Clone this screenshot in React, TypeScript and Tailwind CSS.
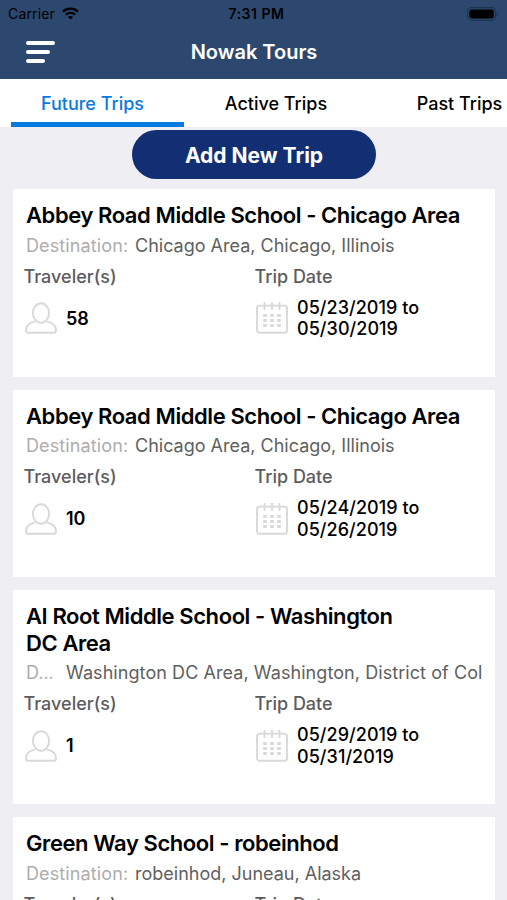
import { ReactNode } from "react";

const trips = [
  {
    title: ["Abbey Road Middle School - Chicago Area"],
    destination: "Chicago Area, Chicago, Illinois",
    travelers: 58,
    start: "05/23/2019",
    end: "05/30/2019",
  },
  {
    title: ["Abbey Road Middle School - Chicago Area"],
    destination: "Chicago Area, Chicago, Illinois",
    travelers: 10,
    start: "05/24/2019",
    end: "05/26/2019",
  },
  {
    title: ["AI Root Middle School - Washington", "DC Area"],
    destination: "Washington DC Area, Washington, District of Col",
    travelers: 1,
    start: "05/29/2019",
    end: "05/31/2019",
    shortLabel: true,
  },
  {
    title: ["Green Way School - robeinhod"],
    destination: "robeinhod, Juneau, Alaska",
  },
];

const WifiIcon = () => (
  <svg width="17" height="13" viewBox="0 0 17 13" fill="none" stroke="#000" strokeWidth="2.4">
    <path d="M1 4.6C5.2.6 11.8.6 16 4.6" />
    <path d="M3.8 7.7c2.7-2.5 6.7-2.5 9.4 0" />
    <path d="M8.5 12.6 5.9 10c1.5-1.3 3.7-1.3 5.2 0z" fill="#000" stroke="none" />
  </svg>
);

const BatteryIcon = () => (
  <svg width="32" height="14" viewBox="0 0 32 14">
    <rect x="0.6" y="0.6" width="28" height="12.8" rx="4" fill="none" stroke="#1f3350" strokeWidth="1.1" />
    <rect x="2.4" y="2.4" width="24.4" height="9.2" rx="2.4" fill="#000" />
    <path d="M30 4.8c1.5.6 1.5 3.8 0 4.4z" fill="#1f3350" />
  </svg>
);

const PersonIcon = () => (
  <svg width="32" height="32" viewBox="0 0 32 32" fill="none" stroke="#dad8d8" strokeWidth="1.9">
    <ellipse cx="16" cy="11" rx="8.1" ry="9.8" />
    <path d="M10 19.6C4.5 20.6 1 23.6 1 28.2c0 1.8.8 2.6 2.4 2.6h25.2c1.6 0 2.4-.8 2.4-2.6 0-4.6-3.5-7.6-9-8.600" />
  </svg>
);

const CalendarIcon = () => (
  <svg width="32" height="32" viewBox="0 0 32 32" fill="none" stroke="#dad8d8" strokeWidth="1.9">
    <rect x="1" y="3.6" width="30" height="27.2" rx="2.6" />
    <path d="M8.5 0v8M16 0v8M23.5 0v8" strokeWidth="1.8" />
    <path
      d="M7.2 13.5h3.6M14.2 13.5h3.6M21.2 13.5h3.6M7.2 18.5h3.6M14.2 18.5h3.6M21.2 18.5h3.6M7.2 23.500h3.6M14.2 23.5h3.6M21.2 23.5h3.6"
      strokeWidth="3"
    />
  </svg>
);

const Tab = ({ children, className }: { children: ReactNode; className: string }) => (
  <div className={`shrink-0 text-[18px] font-medium leading-[50px] ${className}`}>{children}</div>
);

const TripCard = ({ trip }: { trip: (typeof trips)[number] }) => {
  return (
    <div className="bg-white pl-[13px] pt-[13px] pb-[37px]">
      <div className="text-[22px] leading-[26.5px] tracking-[-0.42px] font-semibold text-black whitespace-nowrap">
        {trip.title.map((line) => (
          <div key={line}>{line}</div>
        ))}
      </div>
      <div className="mt-[2px] flex text-[18px] leading-[30px] whitespace-nowrap">
        <span
          className={
            trip.shortLabel ? "w-[40px] text-[#adadad]" : "w-[109px] tracking-[0.12px] text-[#adadad]"
          }
        >
          {trip.shortLabel ? "D..." : "Destination:"}
        </span>
        <span className={trip.shortLabel ? "tracking-[0.07px] text-[#606060]" : "text-[#606060]"}>
          {trip.destination}
        </span>
      </div>
      <div className="-ml-[2.5px] mt-px flex text-[18px] leading-[30px] font-medium text-[#5c5c5c]">
        <span className="w-[231px]">Traveler(s)</span>
        <span>Trip Date</span>
      </div>
      {trip.start && (
        <div className="-ml-px mt-[5px] flex h-[43px] items-center text-[18px] leading-[21.5px] text-black">
          <div className="flex w-[231px] items-center gap-[9px]">
            <PersonIcon />
            <span className="font-semibold">{trip.travelers}</span>
          </div>
          <CalendarIcon />
          <div className="ml-[9px] font-medium tracking-[0.05px]">
            <div>{trip.start} to</div>
            <div>{trip.end}</div>
          </div>
        </div>
      )}
    </div>
  );
};

const App = () => {
  return (
    <div className="h-[900px] overflow-hidden bg-[#efeef3] font-['Inter',sans-serif]">
      <header className="h-[79px] bg-[#2d486e]">
        <div className="grid h-[27px] grid-cols-3 items-center px-[8px] text-[14px] text-black">
          <div className="flex items-center gap-[7px]">
            <span className="tracking-[0.15px]">Carrier</span>
            <WifiIcon />
          </div>
          <span className="pl-[6px] text-center font-semibold tracking-[0.5px]">7:31 PM</span>
          <div className="flex justify-end">
            <BatteryIcon />
          </div>
        </div>
        <div className="grid h-[50px] grid-cols-[100px_1fr_100px] items-center">
          <div className="flex flex-col gap-[5px] pl-[26px]">
            <div className="h-[4px] w-[29px] rounded-full bg-white" />
            <div className="h-[4px] w-[24px] rounded-full bg-white" />
            <div className="h-[4px] w-[19px] rounded-full bg-white" />
          </div>
          <h1 className="pl-px text-center text-[20px] font-semibold text-white">Nowak Tours</h1>
        </div>
      </header>
      <nav className="flex h-[48px] overflow-hidden bg-white pl-[11px] whitespace-nowrap text-black">
        <Tab className="h-[48px] w-[173px] border-b-[5px] border-[#087be0] pr-[10px] text-center text-[#087be0]">
          Future Trips
        </Tab>
        <Tab className="w-[184px] text-center">Active Trips</Tab>
        <Tab className="w-[183px] text-center">Past Trips</Tab>
      </nav>
      <div className="flex justify-center pt-[3px]">
        <button className="h-[49px] w-[244px] rounded-full bg-[#132f74] pt-[2px] pl-px text-[21px] font-bold text-white">
          Add New Trip
        </button>
      </div>
      <main className="flex flex-col gap-[13px] pt-[10.4px] pl-[13px] pr-[12px]">
        {trips.map((trip, i) => (
          <TripCard key={i} trip={trip} />
        ))}
      </main>
    </div>
  );
};

export default App;
